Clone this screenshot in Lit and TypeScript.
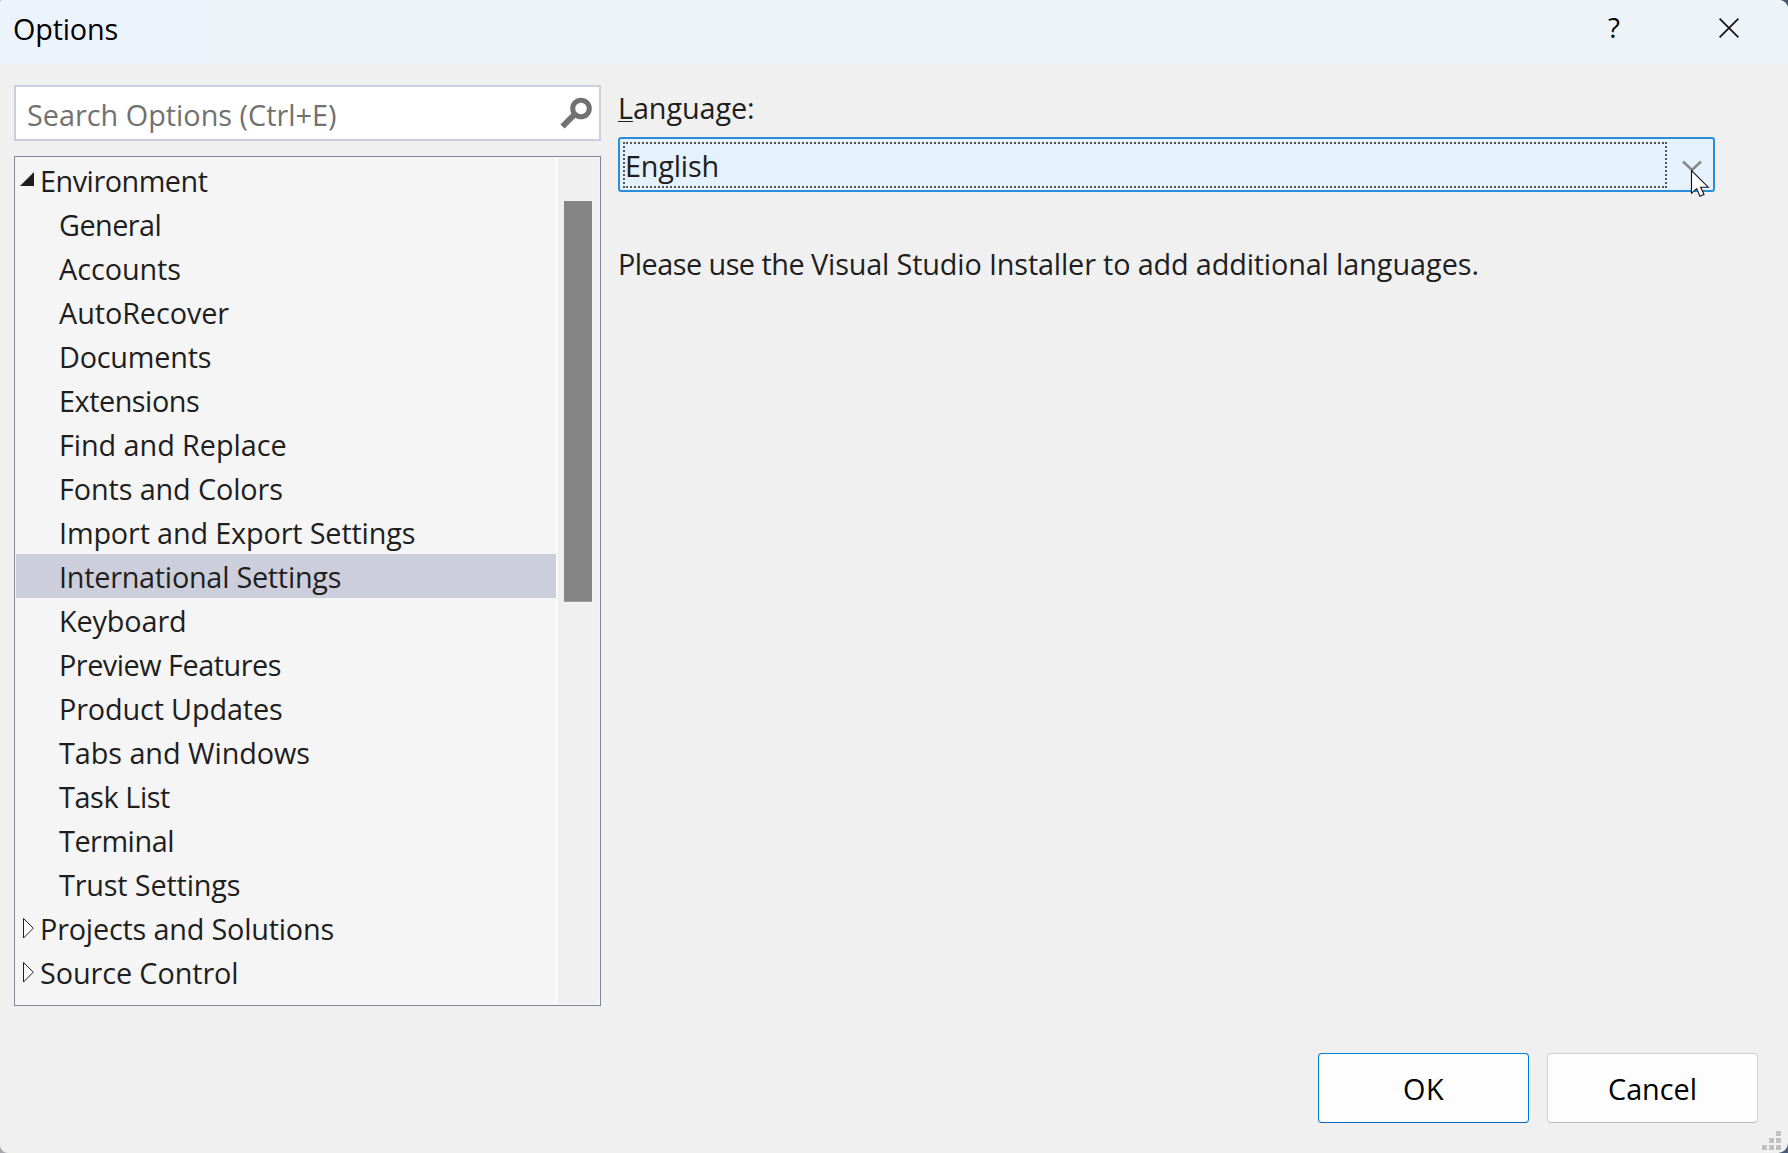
import { LitElement, html, css, svg } from "lit";
import { customElement, property, query } from "lit/decorators.js";

/** A single line of text whose tracking is adjusted to fill a given advance width. */
@customElement("fit-label")
class FitLabel extends LitElement {
  @property() text = "";
  @property({ type: Number }) advance = 0;
  @property({ type: Boolean }) mnemonic = false;
  @query("span") private line!: HTMLSpanElement;

  static styles = css`
    :host { display: block; white-space: nowrap; }
    span { display: inline-block; white-space: pre; font-kerning: normal; font-variant-ligatures: none; }
    .key { display: inline; text-decoration: underline; text-decoration-thickness: 1px; text-underline-offset: 2px; text-decoration-skip-ink: none; }
  `;

  updated() {
    this.line.style.letterSpacing = "0px";
    const natural = this.line.getBoundingClientRect().width;
    this.line.style.letterSpacing = `${(this.advance - natural) / this.text.length}px`;
  }

  render() {
    return this.mnemonic
      ? html`<span><span class="key">${this.text[0]}</span>${this.text.slice(1)}</span>`
      : html`<span>${this.text}</span>`;
  }
}

type Node = { text: string; width: number; level: 0 | 1; open?: boolean; selected?: boolean };

const nodes: Node[] = [
  { text: "Environment", width: 167.5, level: 0, open: true },
  { text: "General", width: 102.2, level: 1 },
  { text: "Accounts", width: 122, level: 1 },
  { text: "AutoRecover", width: 170, level: 1 },
  { text: "Documents", width: 152.2, level: 1 },
  { text: "Extensions", width: 140.2, level: 1 },
  { text: "Find and Replace", width: 227.5, level: 1 },
  { text: "Fonts and Colors", width: 223.8, level: 1 },
  { text: "Import and Export Settings", width: 356.3, level: 1 },
  { text: "International Settings", width: 282.2, level: 1, selected: true },
  { text: "Keyboard", width: 127.5, level: 1 },
  { text: "Preview Features", width: 222, level: 1 },
  { text: "Product Updates", width: 223.5, level: 1 },
  { text: "Tabs and Windows", width: 251, level: 1 },
  { text: "Task List", width: 111, level: 1 },
  { text: "Terminal", width: 115, level: 1 },
  { text: "Trust Settings", width: 181.3, level: 1 },
  { text: "Projects and Solutions", width: 294, level: 0 },
  { text: "Source Control", width: 198.5, level: 0 },
];

@customElement("app-root")
class AppRoot extends LitElement {
  static styles = css`
    :host {
      display: block;
      width: 1788px;
      height: 1153px;
      overflow: hidden;
      background: linear-gradient(to right, #a6a6ab 50%, #4a5878 50%);
      font-family: "Open Sans", "Noto Sans", sans-serif;
      font-size: 28.8px;
      line-height: 46px;
      color: #1e1e1e;
    }
    * { box-sizing: border-box; }
    svg { display: block; flex: none; }
    .dialog {
      position: relative;
      display: flex;
      flex-direction: column;
      width: 1788px;
      height: 1153px;
      background: #f0f0f0;
      border-radius: 3px 9px 10px 8px;
      overflow: hidden;
    }
    .title {
      display: flex;
      align-items: flex-start;
      height: 64px;
      padding: 6px 49px 0 13px;
      background: linear-gradient(to right, #edf3fb, #eef3f8 35%);
      color: #000;
    }
    .spacer { flex: 1; }
    .help { width: 14px; margin: -1px 97px 0 0; font-size: 27.5px; }
    .close { margin-top: 12px; }
    .body { display: flex; gap: 17px; height: 942px; padding: 21px 0 0 14px; }
    .left { display: flex; flex-direction: column; gap: 15px; width: 587px; }
    .search {
      display: flex;
      align-items: flex-start;
      justify-content: space-between;
      height: 56px;
      border: 2px solid #cccedb;
      background: #fff;
      padding: 5px 6px 0 11px;
      color: #717171;
    }
    .search svg { margin-top: 4px; }
    .tree { display: flex; height: 850px; border: 1px solid #828790; background: #f5f5f5; }
    .rows { width: 542px; padding: 1px 0 0 1px; border-right: 1px solid #fff; }
    .row { display: flex; height: 44px; }
    .row.sel { background: #cccedb; }
    .twisty { width: 24px; height: 44px; }
    .child { padding-left: 43px; }
    .bar { flex: 1; margin: 1px; padding: 43px 0 0 6px; background: #f0f0f0; }
    .thumb { width: 28px; height: 401px; background: #858585; border-bottom: 1px solid #9c9c9c; }
    .right { display: flex; flex-direction: column; width: 1097px; }
    .lang { height: 52px; }
    .combo {
      display: flex;
      height: 55px;
      border: 2px solid #2a8dda;
      border-radius: 3px;
      background: #e5f1fb;
      padding: 3px 0 0 3px;
    }
    .focus { width: 1044px; height: 46px; border: 2px dotted #555; }
    .value { margin: -1px 0 0; }
    .chev { margin: 18px 0 0 15px; }
    .note { display: flex; margin-top: 49px; }
    .actions { display: flex; justify-content: flex-end; gap: 18px; padding: 47px 30px 0 0; }
    .btn {
      display: flex;
      justify-content: center;
      width: 211px;
      height: 70px;
      padding-top: 12px;
      border: 1px solid #d0d0d0;
      border-bottom-color: #bababa;
      border-radius: 4px;
      background: #fdfdfd;
      color: #000;
    }
    .btn.primary { border-color: #0078d4; border-bottom-color: #0067b8; }
    .grip { position: absolute; right: 7px; bottom: 3px; }
    .cursor { position: absolute; left: 1690px; top: 168px; }
  `;

  private twisty(open?: boolean) {
    return open
      ? svg`<svg class="twisty" viewBox="0 0 24 44"><path d="M18 14V28H4Z" fill="#1e1e1e"/></svg>`
      : svg`<svg class="twisty" viewBox="0 0 24 44"><path d="M7.5 12.5V32L17.3 22.2Z" fill="#fff" stroke="#1e1e1e"/></svg>`;
  }

  private row(n: Node) {
    return html`<div class="row ${n.level ? "child" : ""} ${n.selected ? "sel" : ""}">
      ${n.level ? "" : this.twisty(n.open)}
      <fit-label .text=${n.text} .advance=${n.width}></fit-label>
    </div>`;
  }

  render() {
    return html`<div class="dialog">
      <div class="title">
        <fit-label .text=${"Options"} .advance=${105}></fit-label>
        <div class="spacer"></div>
        <div class="help">?</div>
        <svg class="close" width="20" height="20" viewBox="0 0 20 20"><path d="M0.6 0.6L19.4 19.4M19.4 0.6L0.6 19.4" stroke="#111" stroke-width="1.7"/></svg>
      </div>
      <div class="body">
        <div class="left">
          <div class="search">
            <fit-label .text=${"Search Options (Ctrl+E)"} .advance=${309.5}></fit-label>
            <svg width="34" height="36" viewBox="0 0 34 36" fill="none" stroke="#717171"><circle cx="22" cy="12.5" r="8.3" stroke-width="5"/><path d="M16 18L3.5 30.5" stroke-width="6"/></svg>
          </div>
          <div class="tree">
            <div class="rows">${nodes.map((n) => this.row(n))}</div>
            <div class="bar"><div class="thumb"></div></div>
          </div>
        </div>
        <div class="right">
          <fit-label class="lang" mnemonic .text=${"Language:"} .advance=${136.5}></fit-label>
          <div class="combo">
            <div class="focus"><fit-label class="value" .text=${"English"} .advance=${94}></fit-label></div>
            <svg class="chev" width="20" height="12" viewBox="0 0 20 12"><path d="M1 1.5L10 10L19 1.5" fill="none" stroke="#888" stroke-width="2.6"/></svg>
          </div>
          <div class="note">
            <fit-label .text=${"Please use the "} .advance=${193}></fit-label>
            <fit-label .text=${"Visual Studio Installer to add additional "} .advance=${525}></fit-label>
            <fit-label .text=${"languages."} .advance=${143}></fit-label>
          </div>
        </div>
      </div>
      <div class="actions">
        <div class="btn primary"><fit-label .text=${"OK"} .advance=${41}></fit-label></div>
        <div class="btn"><fit-label .text=${"Cancel"} .advance=${89}></fit-label></div>
      </div>
      <svg class="grip" width="19" height="19" viewBox="0 0 19 19" fill="#c0c0c0"><path d="M14 0h5v5h-5zM7 7h5v5h-5zM14 7h5v5h-5zM0 14h5v5h-5zM7 14h5v5h-5zM14 14h5v5h-5z"/></svg>
      <svg class="cursor" width="20" height="30" viewBox="0 0 20 30"><path d="M1.5 2.5V25.3L6.6 20.6L10 28.2L14 26.5L10.7 19.2H18.2Z" fill="#fff" stroke="#10101c" stroke-width="1.1"/></svg>
    </div>`;
  }
}
